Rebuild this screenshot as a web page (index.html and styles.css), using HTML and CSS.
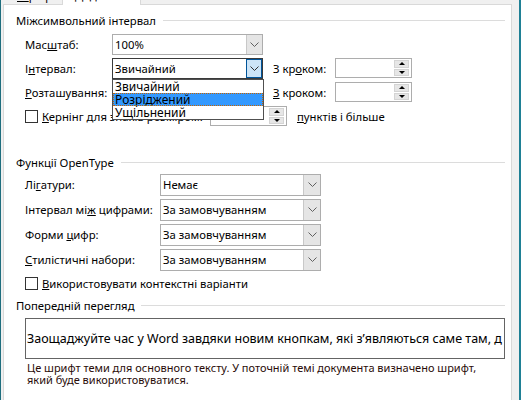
FILE: index.html
```html
<!DOCTYPE html>
<html lang="uk">
<head>
<meta charset="utf-8">
<title>Шрифт — Додатково</title>
<link rel="stylesheet" href="styles.css">
</head>
<body>
<div class="window">
  <div class="tabs">
    <div class="tab tab-font"><span><u>Ш</u>рифт</span></div>
    <div class="tab tab-adv"><span><u>Д</u>одатково</span></div>
  </div>
  <div class="panel">
    <div class="group-title"><span>Міжсимвольний інтервал</span></div>
    <div class="spacing">
      <div class="row">
        <span class="lbl lbl-a">Мас<u>ш</u>таб:</span>
        <div class="combo combo-a">
          <span class="combo-text">100%</span>
          <span class="combo-btn"><svg width="9" height="5" viewBox="0 0 9 5"><path d="M0.5 0.5 L4.5 4.5 L8.5 0.5" fill="none" stroke="#606060"/></svg></span>
        </div>
      </div>
      <div class="row">
        <span class="lbl lbl-a">І<u>н</u>тервал:</span>
        <div class="combo combo-a is-open">
          <span class="combo-text">Звичайний</span>
          <span class="combo-btn"><svg width="9" height="5" viewBox="0 0 9 5"><path d="M0.5 0.5 L4.5 4.5 L8.5 0.5" fill="none" stroke="#303030"/></svg></span>
          <ul class="dropdown">
            <li>Звичайний</li>
            <li class="is-selected">Розріджений</li>
            <li>Ущільнений</li>
          </ul>
        </div>
        <span class="lbl lbl-step">З кр<u>о</u>ком:</span>
        <div class="spin">
          <span class="spin-btns"><span class="spin-up"><i class="tri-up"></i></span><span class="spin-down"><i class="tri-down"></i></span></span>
        </div>
      </div>
      <div class="row">
        <span class="lbl lbl-a"><u>Р</u>озташування:</span>
        <div class="combo combo-a">
          <span class="combo-text">Звичайне</span>
          <span class="combo-btn"><svg width="9" height="5" viewBox="0 0 9 5"><path d="M0.5 0.5 L4.5 4.5 L8.5 0.5" fill="none" stroke="#606060"/></svg></span>
        </div>
        <span class="lbl lbl-step"><u>З</u> кроком:</span>
        <div class="spin">
          <span class="spin-btns"><span class="spin-up"><i class="tri-up"></i></span><span class="spin-down"><i class="tri-down"></i></span></span>
        </div>
      </div>
      <div class="row">
        <span class="check"></span>
        <span class="lbl lbl-kern"><u>К</u>ернінг для знаків розміром:</span>
        <div class="spin">
          <span class="spin-btns"><span class="spin-up"><i class="tri-up"></i></span><span class="spin-down"><i class="tri-down"></i></span></span>
        </div>
        <span class="lbl lbl-after"><u>п</u>унктів і більше</span>
      </div>
    </div>

    <div class="group-title group-ot"><span>Функції OpenType</span></div>
    <div class="ot-rows">
      <div class="row row-b">
        <span class="lbl lbl-b">Лі<u>г</u>атури:</span>
        <div class="combo combo-b">
          <span class="combo-text">Немає</span>
          <span class="combo-btn"><svg width="9" height="5" viewBox="0 0 9 5"><path d="M0.5 0.5 L4.5 4.5 L8.5 0.5" fill="none" stroke="#606060"/></svg></span>
        </div>
      </div>
      <div class="row row-b">
        <span class="lbl lbl-b">Інтервал мі<u>ж</u> цифрами:</span>
        <div class="combo combo-b">
          <span class="combo-text">За замовчуванням</span>
          <span class="combo-btn"><svg width="9" height="5" viewBox="0 0 9 5"><path d="M0.5 0.5 L4.5 4.5 L8.5 0.5" fill="none" stroke="#606060"/></svg></span>
        </div>
      </div>
      <div class="row row-b">
        <span class="lbl lbl-b">Форми <u>ц</u>ифр:</span>
        <div class="combo combo-b">
          <span class="combo-text">За замовчуванням</span>
          <span class="combo-btn"><svg width="9" height="5" viewBox="0 0 9 5"><path d="M0.5 0.5 L4.5 4.5 L8.5 0.5" fill="none" stroke="#606060"/></svg></span>
        </div>
      </div>
      <div class="row row-b">
        <span class="lbl lbl-b"><u>С</u>тилістичні набори:</span>
        <div class="combo combo-b">
          <span class="combo-text">За замовчуванням</span>
          <span class="combo-btn"><svg width="9" height="5" viewBox="0 0 9 5"><path d="M0.5 0.5 L4.5 4.5 L8.5 0.5" fill="none" stroke="#606060"/></svg></span>
        </div>
      </div>
      <div class="row row-check">
        <span class="check"></span>
        <span class="lbl"><u>В</u>икористовувати контекстні варіанти</span>
      </div>
    </div>

    <div class="group-title group-preview"><span>Попередній перегляд</span></div>
    <div class="preview"><span>Заощаджуйте час у Word завдяки новим кнопкам, які з’являються саме там, д</span></div>
    <p class="desc">Це шрифт теми для основного тексту. У поточній темі документа визначено шрифт,<br>який буде використовуватися.</p>
  </div>
</div>
</body>
</html>
```

FILE: styles.css
```css
* { box-sizing: border-box; }

body {
  margin: 0;
  background: #f0f0f0;
  font-family: "Noto Sans", "Liberation Sans", sans-serif;
  font-size: 11.3px;
  color: #000;
}

.window {
  width: 521px;
  height: 400px;
  overflow: hidden;
  border-left: 1px solid #1f6e7e;
  border-right: 2px solid #1f8095;
  padding-left: 2px;
  padding-right: 7px;
}

.tabs {
  position: relative;
  z-index: 1;
  display: flex;
  align-items: flex-start;
  height: 4px;
}

.tab {
  overflow: hidden;
  line-height: 15px;
  white-space: nowrap;
}

.tab span {
  display: block;
  margin-top: -12px;
}

.tab-font {
  width: 60px;
  height: 4px;
  padding-left: 14px;
  border-right: 1px solid #d9d9d9;
}

.tab-adv {
  width: 78px;
  height: 5px;
  padding-left: 12px;
  background: #fff;
  border-right: 1px solid #d9d9d9;
}

.panel {
  height: 420px;
  background: #fff;
  border: 1px solid #d9d9d9;
  padding: 8px 6px 0 12px;
}

.group-title {
  display: flex;
  align-items: center;
  line-height: 15px;
}

.group-title::after {
  content: "";
  flex: 1;
  height: 1px;
  background: #dcdcdc;
  margin-left: 7px;
}

.spacing {
  margin-top: 4px;
  padding-left: 9px;
}

.row {
  display: flex;
  align-items: center;
  height: 24px;
}

.lbl { white-space: nowrap; }
.lbl-a { width: 87px; }
.lbl-step { width: 62px; margin-left: 10px; }
.lbl-kern { width: 168px; overflow: hidden; }
.lbl-after { margin-left: 10px; }

.combo {
  position: relative;
  display: flex;
  height: 21px;
  border: 1px solid #adadad;
  background: #fff;
}

.combo-a { width: 151px; }

.combo-text {
  flex: 1;
  padding-left: 2px;
  line-height: 19px;
  white-space: nowrap;
}

.combo-btn {
  width: 16px;
  display: flex;
  align-items: center;
  justify-content: center;
  background: #e5e5e5;
  border-left: 1px solid #c8c8c8;
}

.combo.is-open { border-color: #3a3a3a; }

.combo.is-open .combo-btn {
  background: #cce4f7;
  border: 1px solid #005499;
}

.dropdown {
  position: absolute;
  z-index: 5;
  top: calc(100% + 1px);
  left: -1px;
  right: -2px;
  margin: 0;
  padding: 0;
  list-style: none;
  background: #fff;
  border: 1px solid #505050;
}

.dropdown li {
  height: 13px;
  line-height: 13px;
  padding-left: 2px;
  font-size: 12px;
  white-space: nowrap;
}

.dropdown .is-selected {
  background: #3399ff;
  outline: 1px dotted #c86400;
  outline-offset: -1px;
}

.spin {
  display: flex;
  justify-content: flex-end;
  width: 77px;
  height: 20px;
  padding: 1px 2px 1px 0;
  border: 1px solid #adadad;
  background: #fff;
}

.spin-btns {
  display: flex;
  flex-direction: column;
  gap: 1px;
  width: 15px;
}

.spin-up, .spin-down {
  flex: 1;
  display: flex;
  align-items: center;
  justify-content: center;
  background: #e6e6e6;
  border: 1px solid #d4d4d4;
}

.tri-up, .tri-down {
  width: 0;
  height: 0;
  border-left: 3px solid transparent;
  border-right: 3px solid transparent;
}

.tri-up { border-bottom: 3px solid #000; }
.tri-down { border-top: 3px solid #000; }

.check {
  width: 13px;
  height: 13px;
  margin-right: 4px;
  border: 1px solid #333;
  background: #fff;
  flex: none;
}

.group-ot { margin-top: 27px; }

.ot-rows {
  margin-top: 2px;
  padding-left: 9px;
}

.row-b { height: 25px; }
.lbl-b { width: 135px; }
.combo-b { width: 161px; height: 22px; }
.combo-b .combo-text { line-height: 20px; }
.combo-b .combo-btn { width: 17px; }

.row-check { height: 22px; }

.group-preview { margin-top: 4px; }

.preview {
  display: flex;
  align-items: center;
  height: 41px;
  margin: 5px 0 0 9px;
  padding-left: 1px;
  border: 1px solid #646464;
  overflow: hidden;
  white-space: nowrap;
  font-size: 12.5px;
}

.desc {
  margin: 3px 0 0 11px;
  line-height: 12px;
  font-size: 11px;
  color: #2a0c08;
  white-space: nowrap;
}
```
